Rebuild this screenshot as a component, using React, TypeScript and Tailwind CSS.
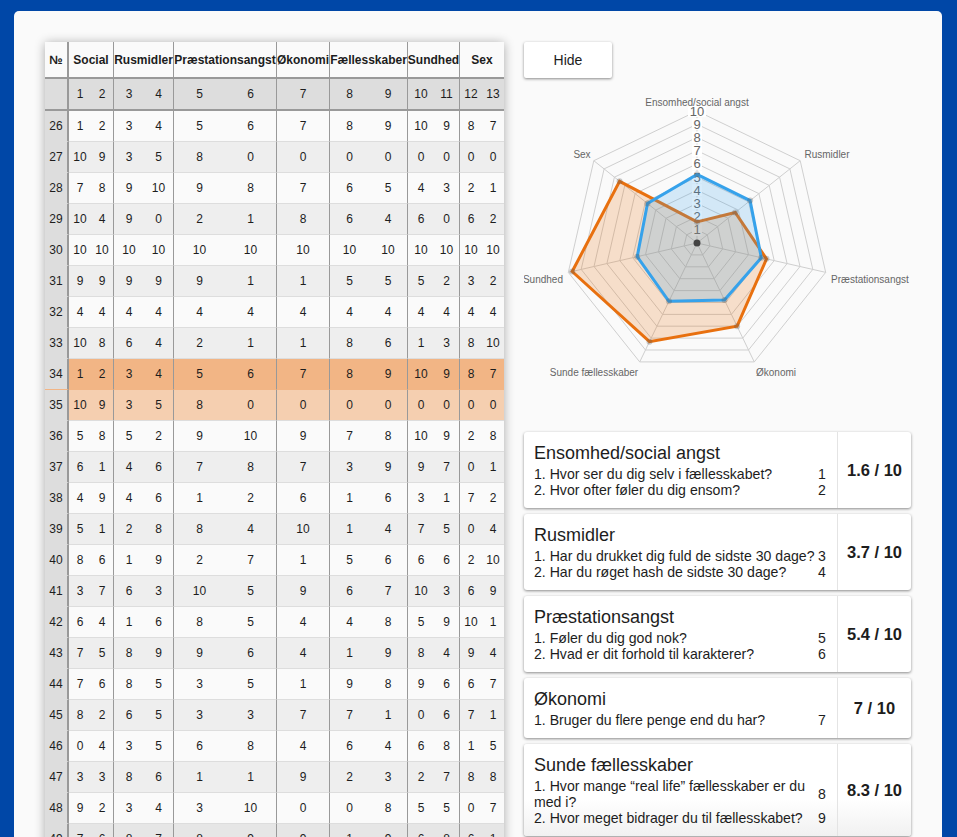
const rows: [number, number[]][] = [
  [26, [1, 2, 3, 4, 5, 6, 7, 8, 9, 10, 9, 8, 7]],
  [27, [10, 9, 3, 5, 8, 0, 0, 0, 0, 0, 0, 0, 0]],
  [28, [7, 8, 9, 10, 9, 8, 7, 6, 5, 4, 3, 2, 1]],
  [29, [10, 4, 9, 0, 2, 1, 8, 6, 4, 6, 0, 6, 2]],
  [30, [10, 10, 10, 10, 10, 10, 10, 10, 10, 10, 10, 10, 10]],
  [31, [9, 9, 9, 9, 9, 1, 1, 5, 5, 5, 2, 3, 2]],
  [32, [4, 4, 4, 4, 4, 4, 4, 4, 4, 4, 4, 4, 4]],
  [33, [10, 8, 6, 4, 2, 1, 1, 8, 6, 1, 3, 8, 10]],
  [34, [1, 2, 3, 4, 5, 6, 7, 8, 9, 10, 9, 8, 7]],
  [35, [10, 9, 3, 5, 8, 0, 0, 0, 0, 0, 0, 0, 0]],
  [36, [5, 8, 5, 2, 9, 10, 9, 7, 8, 10, 9, 2, 8]],
  [37, [6, 1, 4, 6, 7, 8, 7, 3, 9, 9, 7, 0, 1]],
  [38, [4, 9, 4, 6, 1, 2, 6, 1, 6, 3, 1, 7, 2]],
  [39, [5, 1, 2, 8, 8, 4, 10, 1, 4, 7, 5, 0, 4]],
  [40, [8, 6, 1, 9, 2, 7, 1, 5, 6, 6, 6, 2, 10]],
  [41, [3, 7, 6, 3, 10, 5, 9, 6, 7, 10, 3, 6, 9]],
  [42, [6, 4, 1, 6, 8, 5, 4, 4, 8, 5, 9, 10, 1]],
  [43, [7, 5, 8, 9, 9, 6, 4, 1, 9, 8, 4, 9, 4]],
  [44, [7, 6, 8, 5, 3, 5, 1, 9, 8, 9, 6, 6, 7]],
  [45, [8, 2, 6, 5, 3, 3, 7, 7, 1, 0, 6, 7, 1]],
  [46, [0, 4, 3, 5, 6, 8, 4, 6, 4, 6, 8, 1, 5]],
  [47, [3, 3, 8, 6, 1, 1, 9, 2, 3, 2, 7, 8, 8]],
  [48, [9, 2, 3, 4, 3, 10, 0, 0, 8, 5, 5, 0, 7]],
  [49, [7, 6, 8, 7, 8, 9, 9, 1, 9, 6, 8, 6, 1]],
];

const headers = ["Social", "Rusmidler", "Præstationsangst", "Økonomi", "Fællesskaber", "Sundhed", "Sex"];
const gridCols = "grid grid-cols-[24px_22px_23px_30px_30px_51px_52px_53px_39px_39px_26px_26px_22px_22px]";

const groupEnd = new Set([1, 3, 5, 6, 8, 10]);

function DataRow({ label, values, bg, labelBg, h, bottom }: { label: number | string; values: (number | string)[]; bg: string; labelBg: string; h: string; bottom: string }) {
  return (
    <div className={`${gridCols} ${h} ${bg}`}>
      <div className={`flex items-center justify-center border-r-2 border-r-[#999] ${labelBg} ${bottom}`}>{label}</div>
      {values.map((v, i) => (
        <div
          key={i}
          className={`flex items-center justify-center ${bottom} ${groupEnd.has(i) ? "border-r border-r-[#999]" : ""}`}
        >
          {v}
        </div>
      ))}
    </div>
  );
}

function Table() {
  return (
    <div className="w-[459px] shrink-0 self-start bg-[#fafafa] text-[12px] leading-none text-[#1d1d1d] shadow-[0_1px_10px_rgba(0,0,0,0.32)]">
      <div className="grid h-[37px] grid-cols-[24px_45px_60px_103px_53px_78px_52px_44px] border-b-[2px] border-[#999] font-bold">
        <div className="flex items-center justify-center border-r-2 border-[#999]">№</div>
        {headers.map((h, i) => (
          <div
            key={h}
            className={`flex items-center justify-center whitespace-nowrap ${i < headers.length - 1 ? "border-r border-[#999]" : ""}`}
          >
            {h}
          </div>
        ))}
      </div>
      <DataRow
        label=""
        values={[1, 2, 3, 4, 5, 6, 7, 8, 9, 10, 11, 12, 13]}
        bg="bg-[#ddd]"
        labelBg="bg-[#ddd]"
        h="h-[32px]"
        bottom="border-b-2 border-b-[#999]"
      />
      {rows.map(([n, vals]) => {
        const bg = n === 34 ? "bg-[#f2b585]" : n === 35 ? "bg-[#f5cfb0]" : n === 49 ? "bg-[#e6e6e6]" : n % 2 === 1 ? "bg-[#eeeeee]" : "bg-[#fafafa]";
        const bottom = n === 34 ? "border-b border-b-[#f2b585]" : "border-b border-b-[#ddd]";
        return <DataRow key={n} label={n} values={vals} bg={bg} labelBg="bg-[#ddd]" h="h-[31px]" bottom={bottom} />;
      })}
    </div>
  );
}

const cx = 173;
const cy = 153;
const unit = 13.2;
const pt = (k: number, v: number) => {
  const a = (k * 2 * Math.PI) / 7;
  return [cx + Math.sin(a) * v * unit, cy - Math.cos(a) * v * unit] as const;
};
const poly = (vals: number[]) => vals.map((v, k) => pt(k, v).map((n) => n.toFixed(1)).join(",")).join(" ");
const blue = [5.2, 5.15, 5.0, 4.8, 4.9, 4.65, 4.8];
const orange = [1.6, 3.7, 5.4, 7.0, 8.3, 9.7, 7.5];

function Radar() {
  const labels: [string, number, number, "middle" | "start" | "end"][] = [
    ["Ensomhed/social angst", 173, 16, "middle"],
    ["Rusmidler", 303, 68, "middle"],
    ["Præstationsangst", 307, 193, "start"],
    ["Økonomi", 252, 286, "middle"],
    ["Sunde fællesskaber", 70, 286, "middle"],
    ["Sundhed", 39, 193, "end"],
    ["Sex", 58, 68, "middle"],
  ];
  return (
    <svg width="387" height="330" viewBox="0 0 387 330" className="my-[12px] block overflow-hidden" style={{ fontFamily: '"Liberation Sans", Arial, sans-serif' }}>
      {[1, 2, 3, 4, 5, 6, 7, 8, 9, 10].map((r) => (
        <polygon key={r} points={poly(Array(7).fill(r))} fill="none" stroke="#cfcfcf" strokeWidth="1" />
      ))}
      {[0, 1, 2, 3, 4, 5, 6].map((k) => {
        const [x, y] = pt(k, 10);
        return <line key={k} x1={cx} y1={cy} x2={x} y2={y} stroke="#cfcfcf" strokeWidth="1" />;
      })}
      {[1, 2, 3, 4, 5, 6, 7, 8, 9, 10].map((r) => (
        <g key={r}>
          <rect x={cx - (r === 10 ? 9 : 5)} y={cy - r * unit - 6} width={r === 10 ? 18 : 10} height="12" fill="#fff" />
          <text x={cx} y={cy - r * unit + 4.5} textAnchor="middle" fontSize="13" fill="#666">{r}</text>
        </g>
      ))}
      <polygon points={poly(orange)} fill="rgba(230,110,10,0.2)" stroke="#e8700f" strokeWidth="3" strokeLinejoin="miter" />
      <polygon points={poly(blue)} fill="rgba(54,162,235,0.2)" stroke="#36a2eb" strokeWidth="3" strokeLinejoin="miter" />
      {[...orange, ...blue].map((v, i) => {
        const [x, y] = pt(i % 7, v);
        return <circle key={i} cx={x} cy={y} r="3" fill="rgba(90,90,90,0.3)" />;
      })}
      <circle cx={cx} cy={cy} r="3.5" fill="#444" />
      {labels.map(([t, x, y, anchor]) => (
        <text key={t} x={x} y={y} textAnchor={anchor} fontSize="10" fill="#666">{t}</text>
      ))}
    </svg>
  );
}

const cards: { title: string; score: string; qs: [string, number][] }[] = [
  { title: "Ensomhed/social angst", score: "1.6 / 10", qs: [["1. Hvor ser du dig selv i fællesskabet?", 1], ["2. Hvor ofter føler du dig ensom?", 2]] },
  { title: "Rusmidler", score: "3.7 / 10", qs: [["1. Har du drukket dig fuld de sidste 30 dage?", 3], ["2. Har du røget hash de sidste 30 dage?", 4]] },
  { title: "Præstationsangst", score: "5.4 / 10", qs: [["1. Føler du dig god nok?", 5], ["2. Hvad er dit forhold til karakterer?", 6]] },
  { title: "Økonomi", score: "7 / 10", qs: [["1. Bruger du flere penge end du har?", 7]] },
  { title: "Sunde fællesskaber", score: "8.3 / 10", qs: [["1. Hvor mange “real life” fællesskaber er du med i?", 8], ["2. Hvor meget bidrager du til fællesskabet?", 9]] },
];

function Card({ title, score, qs, fade }: (typeof cards)[number] & { fade?: boolean }) {
  return (
    <div className={`flex w-[387px] rounded-[3px] text-[#1d1d1d] shadow-[0_1px_3px_rgba(0,0,0,0.45)] ${fade ? "bg-gradient-to-b from-white from-60% to-[#f1f1f1]" : "bg-white"}`}>
      <div className="w-[314px] border-r border-[#e4e4e4] pb-[10px] pl-[10px] pt-[10px]">
        <div className="h-[24px] text-[18px] leading-[22px]">{title}</div>
        {qs.map(([q, n]) => (
          <div key={n} className="flex items-center text-[14.1px] leading-[16px]">
            <div className="w-[283px]">{q}</div>
            <div className="w-[10px] text-center">{n}</div>
          </div>
        ))}
      </div>
      <div className="flex flex-1 items-center justify-center text-[16.5px] font-bold">{score}</div>
    </div>
  );
}

export default function App() {
  return (
    <div className="relative h-[837px] overflow-hidden bg-[#0047a7] pl-[14px] pr-[15px] pt-[11px]" style={{ fontFamily: '"Liberation Sans", Arial, Helvetica, sans-serif' }}>
      <div className="flex gap-[20px] rounded-[5px] bg-[#fafafa] p-[31px]">
        <Table />
        <div className="flex w-[387px] flex-col">
          <button className="h-[36px] w-[88px] rounded-[2px] bg-white text-[14px] text-[#1d1d1d] shadow-[0_1px_3px_rgba(0,0,0,0.45)]">Hide</button>
          <Radar />
          <div className="flex flex-col gap-[6px]">
            {cards.map((c, i) => (
              <Card key={c.title} {...c} fade={i === cards.length - 1} />
            ))}
          </div>
        </div>
      </div>
    </div>
  );
}
